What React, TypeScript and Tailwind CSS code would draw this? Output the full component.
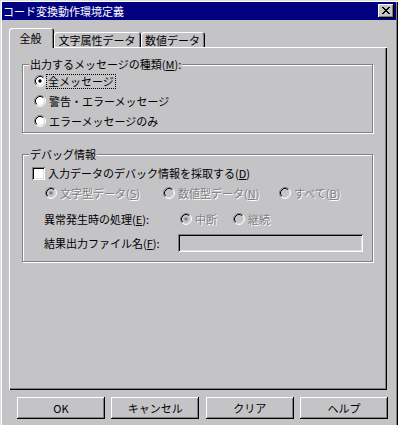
import type { ReactNode } from 'react';

const raised = 'shadow-[inset_-1px_-1px_0_#000,inset_1px_1px_0_#fff,inset_-2px_-2px_0_#808080]';
const sunken = 'shadow-[inset_1px_1px_0_#808080,inset_-1px_-1px_0_#fff,inset_2px_2px_0_#000,inset_-2px_-2px_0_#dfdfdf]';
const dim = 'text-[#808080] [text-shadow:1px_1px_0_#fff]';

function Radio({ checked, disabled }: { checked?: boolean; disabled?: boolean }) {
  return (
    <svg width="12" height="12" viewBox="0 0 12 12" className="shrink-0">
      <circle cx="6" cy="6" r="4.2" fill={disabled ? '#c4c3c6' : '#fff'} />
      <path d="M2.11 9.89A5.5 5.5 0 0 1 9.89 2.11" stroke="#808080" fill="none" />
      <path d="M9.89 2.11A5.5 5.5 0 0 1 2.11 9.89" stroke="#fff" fill="none" />
      <path d="M2.82 9.18A4.5 4.5 0 0 1 9.18 2.82" stroke="#000" fill="none" />
      <path d="M9.18 2.82A4.5 4.5 0 0 1 2.82 9.18" stroke="#dfdfdf" fill="none" />
      {checked ? <circle cx="6" cy="6" r="1.7" fill={disabled ? '#808080' : '#000'} /> : null}
    </svg>
  );
}

function Key({ children }: { children: ReactNode }) {
  return <span className="underline underline-offset-[1px]">{children}</span>;
}

function Group({ title, className, children }: { title: ReactNode; className?: string; children: ReactNode }) {
  return (
    <div className={`relative w-[351px] border border-[#808080] shadow-[1px_1px_0_#fff,inset_1px_1px_0_#fff] ${className ?? ''}`}>
      <span className="absolute left-[6px] top-[-8px] bg-[#c4c3c6] px-[1px] leading-[14px]">{title}</span>
      {children}
    </div>
  );
}

export default function App() {
  const tabs = [
    { label: '全般', width: 'w-[45px]', active: true },
    { label: '文字属性データ', width: 'w-[87px]' },
    { label: '数値データ', width: 'w-[64px]' },
  ];

  return (
    <div className="h-[425px] w-[398px] overflow-hidden bg-[#c4c3c6] p-[2px] font-['Noto_Sans_CJK_JP',sans-serif] text-[11px] leading-none text-black shadow-[inset_1px_1px_0_#dfdfdf,inset_2px_2px_0_#fff,inset_-1px_0_0_#000,inset_-2px_0_0_#808080]">
      {/* title bar */}
      <div className="flex h-[18px] items-center justify-between bg-[#000080] pl-[1px] pr-[2px]">
        <span className="text-white">コード変換動作環境定義</span>
        <div className={`flex h-[14px] w-[16px] items-center justify-center bg-[#c4c3c6] ${raised}`}>
          <svg width="8" height="7" viewBox="0 0 8 7" shapeRendering="crispEdges" className="mb-px">
            <path d="M0 0h2v1H0zM6 0h2v1H6zM1 1h2v1H1zM5 1h2v1H5zM2 2h4v1H2zM3 3h2v1H3zM2 4h4v1H2zM1 5h2v1H1zM5 5h2v1H5zM0 6h2v1H0zM6 6h2v1H6z" fill="#000" />
          </svg>
        </div>
      </div>

      {/* tabs */}
      <div className="mt-[8px] flex h-[20px] items-end pl-[7px]">
        {tabs.map((tab) =>
          tab.active ? (
            <div key={tab.label} className={`relative z-10 flex h-[20px] items-center justify-center rounded-t-[3px] bg-[#c4c3c6] pr-[2px] shadow-[inset_1px_1px_0_#fff,inset_-1px_0_0_#000,inset_-2px_0_0_#808080] ${tab.width}`}>
              {tab.label}
            </div>
          ) : (
            <div key={tab.label} className={`mb-px flex h-[15px] items-center justify-center rounded-t-[3px] pr-[1px] pt-[1px] shadow-[inset_1px_1px_0_#fff,inset_-1px_0_0_#000,inset_-2px_0_0_#808080] ${tab.width}`}>
              {tab.label}
            </div>
          ),
        )}
      </div>

      {/* tab panel */}
      <div className="-mt-px ml-[7px] h-[343px] w-[378px] pl-[13px] pt-[17px] shadow-[inset_1px_1px_0_#fff,inset_-1px_-1px_0_#000,inset_-2px_-2px_0_#808080]">
        <Group title={<>出力するメッセージの種類(<Key>M</Key>):</>} className="pb-px pt-[6px]">
          <div className="flex h-[20px] items-center pl-[11px]">
            <Radio checked />
            <span className="ml-px px-px leading-[13px] outline-1 outline-dotted outline-black">全メッセージ</span>
          </div>
          <div className="flex h-[20px] items-center pl-[11px]">
            <Radio />
            <span className="ml-[3px]">警告・エラーメッセージ</span>
          </div>
          <div className="flex h-[20px] items-center pl-[11px]">
            <Radio />
            <span className="ml-[3px]">エラーメッセージのみ</span>
          </div>
        </Group>

        <Group title="デバッグ情報" className="mt-[21px] pb-[7px] pt-[8px]">
          <div className="flex h-[20px] items-center pl-[9px]">
            <div className={`h-[13px] w-[13px] shrink-0 bg-white ${sunken}`} />
            <span className="ml-[3px]">入力データのデバック情報を採取する(<Key>D</Key>)</span>
          </div>
          <div className={`flex h-[20px] items-center pl-[22px] ${dim}`}>
            <div className="flex w-[118px] items-center">
              <Radio checked disabled />
              <span className="ml-[3px]">文字型データ(<Key>S</Key>)</span>
            </div>
            <div className="flex w-[116px] items-center">
              <Radio disabled />
              <span className="ml-[3px]">数値型データ(<Key>N</Key>)</span>
            </div>
            <div className="flex items-center">
              <Radio disabled />
              <span className="ml-[3px]">すべて(<Key>B</Key>)</span>
            </div>
          </div>
          <div className="mt-[6px] flex h-[20px] items-center pl-[21px]">
            <span className="w-[136px]">異常発生時の処理(<Key>E</Key>):</span>
            <div className={`flex w-[53px] items-center ${dim}`}>
              <Radio checked disabled />
              <span className="ml-[3px]">中断</span>
            </div>
            <div className={`flex items-center ${dim}`}>
              <Radio disabled />
              <span className="ml-[3px]">継続</span>
            </div>
          </div>
          <div className="mt-[3px] flex h-[22px] items-center pl-[21px]">
            <span className="w-[134px]">結果出力ファイル名(<Key>F</Key>):</span>
            <div className={`h-[18px] w-[185px] bg-[#c4c3c6] ${sunken}`} />
          </div>
        </Group>
      </div>

      {/* buttons */}
      <div className="ml-[15px] mt-[7px] flex w-[371px] justify-between">
        {['OK', 'キャンセル', 'クリア', 'ヘルプ'].map((label) => (
          <button key={label} type="button" className={`flex h-[22px] w-[88px] items-center justify-center bg-[#c4c3c6] ${raised}`}>
            {label}
          </button>
        ))}
      </div>
    </div>
  );
}
